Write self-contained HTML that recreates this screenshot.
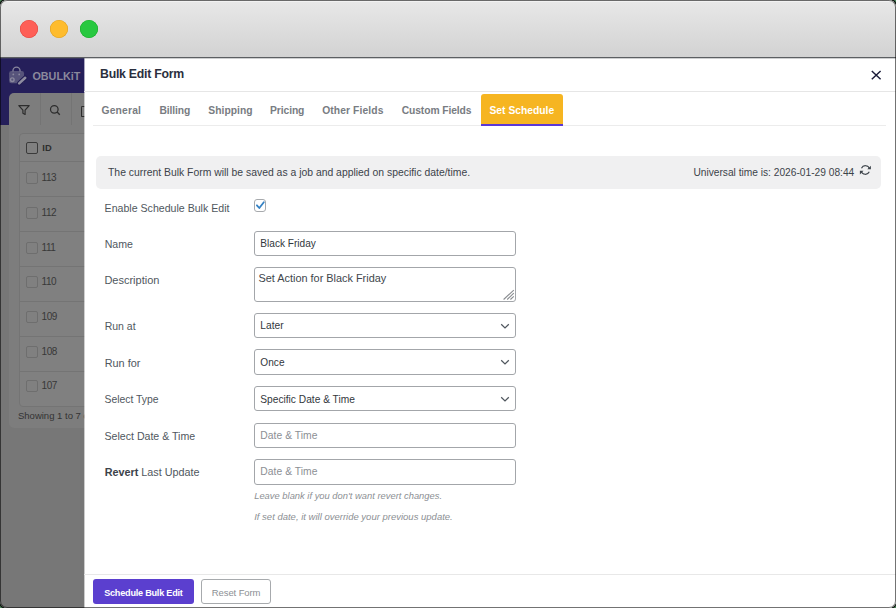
<!DOCTYPE html>
<html><head><meta charset="utf-8">
<style>
html,body{margin:0;padding:0;width:896px;height:608px;overflow:hidden;background:#4f8a5e;}
.win{position:absolute;left:0;top:0;width:896px;height:608px;border-radius:7px;overflow:hidden;background:#777;box-shadow:0 0 0 1.5px rgba(0,0,0,0.85);}
.b{position:absolute;box-sizing:content-box;}
.t{position:absolute;white-space:nowrap;line-height:1;font-family:"Liberation Sans",sans-serif;}
.title{position:absolute;left:0;top:0;width:896px;height:58px;background:linear-gradient(#e8e8e8,#d2d2d2);}
.dot{position:absolute;top:20px;width:18px;height:18px;border-radius:50%;}
.frame{position:absolute;left:0;top:0;width:894px;height:606px;border:1px solid rgba(0,0,0,0.55);border-radius:7px;pointer-events:none;}
</style></head><body>
<div class="win">
<div class="title">
<div class="b" style="left:0;top:1px;width:896px;height:1px;background:#f2f2f2"></div>
<div class="dot" style="left:20px;background:#fe5f57;box-shadow:inset 0 0 0 0.6px #e2463f"></div>
<div class="dot" style="left:50px;background:#febc2e;box-shadow:inset 0 0 0 0.6px #dfa023"></div>
<div class="dot" style="left:80px;background:#28c840;box-shadow:inset 0 0 0 0.6px #1aab29"></div>
<div class="b" style="left:0;top:57px;width:896px;height:1px;background:#5c5f62"></div>
</div>
<div class="b" style="left:0px;top:58px;width:896px;height:550px;background:#777777"></div>
<div class="b" style="left:0px;top:58px;width:896px;height:67px;background:#251f5a"></div>
<svg class="b" style="left:4px;top:62px" width="30" height="28" viewBox="0 0 30 28">
<rect x="5.1" y="9" width="14.9" height="12.2" rx="2.2" fill="#57547b"/>
<path d="M9 9.4 V8.6 a3.5 3.5 0 0 1 7 0 V9.4" fill="none" stroke="#8a889e" stroke-width="1.3"/>
<circle cx="9.3" cy="12.4" r="0.9" fill="#8a889e"/><circle cx="15.2" cy="12.4" r="0.9" fill="#8a889e"/>
<circle cx="8.3" cy="17.7" r="1.8" fill="none" stroke="#8a889e" stroke-width="1.4"/>
<path d="M15.2 21.4 L21.2 15.8" stroke="#201a52" stroke-width="4.6" stroke-linecap="round"/>
<path d="M15.2 21.4 L21.2 15.8" stroke="#8e8ca0" stroke-width="2.6" stroke-linecap="round"/>
</svg>
<div class="t" style="left:32.4px;top:71.06px;font-size:10.8px;color:#8b899c;font-weight:bold;font-style:normal;letter-spacing:0px;">OBULKiT</div>
<div class="b" style="left:9px;top:93px;width:120px;height:32px;background:#7d7d7d;border-top-left-radius:5px"></div>
<div class="b" style="left:40px;top:93px;width:1px;height:32px;background:#747474"></div>
<div class="b" style="left:71px;top:93px;width:1px;height:32px;background:#747474"></div>
<svg class="b" style="left:17px;top:103px" width="14" height="13" viewBox="0 0 14 13">
<path d="M1.8 2.6 h10.4 l-4.1 4.6 v4.3 l-2.2-1.2 v-3.1 z" fill="none" stroke="#2d2d2d" stroke-width="1.2" stroke-linejoin="round"/></svg>
<svg class="b" style="left:48px;top:103px" width="14" height="14" viewBox="0 0 14 14">
<circle cx="6.3" cy="6.3" r="3.8" fill="none" stroke="#2d2d2d" stroke-width="1.25"/><path d="M9.1 9.1 l2.7 2.7" stroke="#2d2d2d" stroke-width="1.35"/></svg>
<div class="b" style="left:81px;top:106px;width:5px;height:8.5px;border:1.2px solid #2d2d2d;border-right:none;border-radius:1.5px 0 0 1.5px"></div>
<div class="b" style="left:9px;top:125px;width:120px;height:303px;background:#7d7d7d;border-radius:0 0 5px 5px"></div>
<div class="b" style="left:18.6px;top:133px;width:110px;height:271.5px;background:#808080;border:1px solid #747474;border-radius:4px"></div>
<div class="b" style="left:20px;top:161px;width:110px;height:1px;background:#747474"></div>
<div class="b" style="left:26px;top:142px;width:10px;height:10px;border:1.3px solid #3a3a3a;border-radius:2px"></div>
<div class="t" style="left:42.3px;top:143.53px;font-size:9.3px;color:#2e2e2e;font-weight:bold;font-style:normal;letter-spacing:0px;">ID</div>
<div class="b" style="left:26px;top:172.4px;width:10px;height:10px;border:1px solid #6e6e6e;border-radius:2px"></div>
<div class="t" style="left:41.6px;top:173.44px;font-size:10px;color:#383838;font-weight:normal;font-style:normal;letter-spacing:-0.45px;">113</div>
<div class="b" style="left:20px;top:196.2px;width:110px;height:1px;background:#747474"></div>
<div class="b" style="left:26px;top:207.05px;width:10px;height:10px;border:1px solid #6e6e6e;border-radius:2px"></div>
<div class="t" style="left:41.6px;top:208.09px;font-size:10px;color:#383838;font-weight:normal;font-style:normal;letter-spacing:-0.45px;">112</div>
<div class="b" style="left:20px;top:231.1px;width:110px;height:1px;background:#747474"></div>
<div class="b" style="left:26px;top:241.7px;width:10px;height:10px;border:1px solid #6e6e6e;border-radius:2px"></div>
<div class="t" style="left:41.6px;top:242.73px;font-size:10px;color:#383838;font-weight:normal;font-style:normal;letter-spacing:-0.45px;">111</div>
<div class="b" style="left:20px;top:266.0px;width:110px;height:1px;background:#747474"></div>
<div class="b" style="left:26px;top:276.35px;width:10px;height:10px;border:1px solid #6e6e6e;border-radius:2px"></div>
<div class="t" style="left:41.6px;top:277.39px;font-size:10px;color:#383838;font-weight:normal;font-style:normal;letter-spacing:-0.45px;">110</div>
<div class="b" style="left:20px;top:300.9px;width:110px;height:1px;background:#747474"></div>
<div class="b" style="left:26px;top:311.0px;width:10px;height:10px;border:1px solid #6e6e6e;border-radius:2px"></div>
<div class="t" style="left:41.6px;top:312.04px;font-size:10px;color:#383838;font-weight:normal;font-style:normal;letter-spacing:-0.45px;">109</div>
<div class="b" style="left:20px;top:335.79999999999995px;width:110px;height:1px;background:#747474"></div>
<div class="b" style="left:26px;top:345.65px;width:10px;height:10px;border:1px solid #6e6e6e;border-radius:2px"></div>
<div class="t" style="left:41.6px;top:346.69px;font-size:10px;color:#383838;font-weight:normal;font-style:normal;letter-spacing:-0.45px;">108</div>
<div class="b" style="left:20px;top:370.7px;width:110px;height:1px;background:#747474"></div>
<div class="b" style="left:26px;top:380.29999999999995px;width:10px;height:10px;border:1px solid #6e6e6e;border-radius:2px"></div>
<div class="t" style="left:41.6px;top:381.33px;font-size:10px;color:#383838;font-weight:normal;font-style:normal;letter-spacing:-0.45px;">107</div>
<div class="t" style="left:18px;top:410.96px;font-size:9.5px;color:#333333;font-weight:normal;font-style:normal;letter-spacing:0px;">Showing 1 to 7 of</div>
<div class="b" style="left:85px;top:58px;width:811px;height:550px;background:#ffffff"></div>
<div class="b" style="left:84px;top:58px;width:1px;height:550px;background:rgba(255,255,255,0.62)"></div>
<div class="t" style="left:100px;top:67.89px;font-size:12.3px;color:#2b2f3e;font-weight:bold;font-style:normal;letter-spacing:-0.25px;">Bulk Edit Form</div>
<svg class="b" style="left:870px;top:68.5px" width="12" height="12" viewBox="0 0 12 12">
<path d="M1.8 1.9 L10.6 10.3 M10.6 1.9 L1.8 10.3" stroke="#1c1d3a" stroke-width="1.45"/></svg>
<div class="b" style="left:84px;top:91px;width:812px;height:1px;background:#e6e6e6"></div>
<div class="b" style="left:93px;top:125px;width:793px;height:1px;background:#ececec"></div>
<div class="b" style="left:481px;top:94px;width:82px;height:30px;background:#f6b521;border-radius:3px 3px 0 0"></div>
<div class="b" style="left:481px;top:124px;width:82px;height:2px;background:#5a38d5"></div>
<div class="t" style="left:101.5px;top:105.98px;font-size:10.3px;color:#787c82;font-weight:bold;font-style:normal;letter-spacing:0.18px;">General</div>
<div class="t" style="left:159.5px;top:105.98px;font-size:10.3px;color:#787c82;font-weight:bold;font-style:normal;letter-spacing:-0.12px;">Billing</div>
<div class="t" style="left:208.29999999999998px;top:105.98px;font-size:10.3px;color:#787c82;font-weight:bold;font-style:normal;letter-spacing:0.02px;">Shipping</div>
<div class="t" style="left:270.09999999999997px;top:105.98px;font-size:10.3px;color:#787c82;font-weight:bold;font-style:normal;letter-spacing:-0.1px;">Pricing</div>
<div class="t" style="left:322.2px;top:105.98px;font-size:10.3px;color:#787c82;font-weight:bold;font-style:normal;letter-spacing:0.1px;">Other Fields</div>
<div class="t" style="left:401.7px;top:105.98px;font-size:10.3px;color:#787c82;font-weight:bold;font-style:normal;letter-spacing:-0.09px;">Custom Fields</div>
<div class="t" style="left:489.5px;top:105.98px;font-size:10.3px;color:#ffffff;font-weight:bold;font-style:normal;letter-spacing:0px;">Set Schedule</div>
<div class="b" style="left:96px;top:156px;width:785px;height:33px;background:#f0f0f1;border-radius:5px"></div>
<div class="t" style="left:108px;top:168.10px;font-size:10.4px;color:#3c434a;font-weight:normal;font-style:normal;letter-spacing:0px;">The current Bulk Form will be saved as a job and applied on specific date/time.</div>
<div class="t" style="left:693.4px;top:168.27px;font-size:10.2px;color:#3c434a;font-weight:normal;font-style:normal;letter-spacing:0px;">Universal time is: 2026-01-29 08:44</div>
<svg class="b" style="left:858px;top:162.5px" width="15" height="14" viewBox="0 0 15 14">
<path d="M3.50 5.18 A4.3 4.3 0 0 1 11.55 5.89" fill="none" stroke="#3c434a" stroke-width="1.15"/>
<path d="M9.3 6.3 L12.9 6.3 L12.9 2.7 Z" fill="#3c434a"/>
<path d="M11.30 8.82 A4.3 4.3 0 0 1 3.25 8.11" fill="none" stroke="#3c434a" stroke-width="1.15"/>
<path d="M5.5 7.8 L1.9 7.8 L1.9 11.4 Z" fill="#3c434a"/>
</svg>
<div class="t" style="left:104.6px;top:202.53px;font-size:10.6px;color:#50575e;font-weight:normal;font-style:normal;letter-spacing:0px;">Enable Schedule Bulk Edit</div>
<div class="b" style="left:254.2px;top:199.3px;width:9.8px;height:10.4px;border:1px solid #a7aaad;border-radius:3px;background:#fff"></div>
<svg class="b" style="left:254px;top:199px" width="12" height="12" viewBox="0 0 12 12">
<path d="M2.9 6.3 L5.3 9 L9.8 3.2" fill="none" stroke="#3582c4" stroke-width="1.8" stroke-linecap="round" stroke-linejoin="round"/></svg>
<div class="t" style="left:104.7px;top:239.23px;font-size:10.6px;color:#50575e;font-weight:normal;font-style:normal;letter-spacing:0px;">Name</div>
<div class="b" style="left:254px;top:231px;width:260px;height:22.5px;border:1px solid #a3a6aa;border-radius:3px;background:#fff"></div>
<div class="t" style="left:260.3px;top:238.75px;font-size:10.1px;color:#32373c;font-weight:normal;font-style:normal;letter-spacing:0px;">Black Friday</div>
<div class="t" style="left:104.4px;top:275.19px;font-size:11px;color:#50575e;font-weight:normal;font-style:normal;letter-spacing:0px;">Description</div>
<div class="b" style="left:254px;top:267px;width:260px;height:32.5px;border:1px solid #a3a6aa;border-radius:3px;background:#fff"></div>
<div class="t" style="left:258.5px;top:272.97px;font-size:10.9px;color:#40464c;font-weight:normal;font-style:normal;letter-spacing:0px;">Set Action for Black Friday</div>
<svg class="b" style="left:500px;top:288px" width="16" height="14" viewBox="0 0 16 14">
<path d="M3.6 11.5 L13.8 2.1 M7.2 11.5 L13.8 5.2 M10.4 11.5 L13.8 8.3" stroke="#8a8d91" stroke-width="1.1"/></svg>
<div class="t" style="left:104.7px;top:321.31px;font-size:10.5px;color:#50575e;font-weight:normal;font-style:normal;letter-spacing:0px;">Run at</div>
<div class="b" style="left:254px;top:313.1px;width:260px;height:23.4px;border:1px solid #a3a6aa;border-radius:3px;background:#fff"></div>
<div class="t" style="left:260.3px;top:321.47px;font-size:10.2px;color:#32373c;font-weight:normal;font-style:normal;letter-spacing:0.05px;">Later</div>
<svg class="b" style="left:500px;top:322.4px" width="10" height="8" viewBox="0 0 10 8">
<path d="M1.2 2.3 L5 6 L8.8 2.3" fill="none" stroke="#50575e" stroke-width="1.25"/></svg>
<div class="t" style="left:104.7px;top:357.67px;font-size:10.9px;color:#50575e;font-weight:normal;font-style:normal;letter-spacing:0px;">Run for</div>
<div class="b" style="left:254px;top:349.3px;width:260px;height:23.4px;border:1px solid #a3a6aa;border-radius:3px;background:#fff"></div>
<div class="t" style="left:260.3px;top:358.05px;font-size:10.1px;color:#32373c;font-weight:normal;font-style:normal;letter-spacing:0.05px;">Once</div>
<svg class="b" style="left:500px;top:358.4px" width="10" height="8" viewBox="0 0 10 8">
<path d="M1.2 2.3 L5 6 L8.8 2.3" fill="none" stroke="#50575e" stroke-width="1.25"/></svg>
<div class="t" style="left:104.5px;top:394.50px;font-size:10.4px;color:#50575e;font-weight:normal;font-style:normal;letter-spacing:0px;">Select Type</div>
<div class="b" style="left:254px;top:386.1px;width:260px;height:23.3px;border:1px solid #a3a6aa;border-radius:3px;background:#fff"></div>
<div class="t" style="left:260.3px;top:394.57px;font-size:10.2px;color:#32373c;font-weight:normal;font-style:normal;letter-spacing:0px;">Specific Date &amp; Time</div>
<svg class="b" style="left:500px;top:395.4px" width="10" height="8" viewBox="0 0 10 8">
<path d="M1.2 2.3 L5 6 L8.8 2.3" fill="none" stroke="#50575e" stroke-width="1.25"/></svg>
<div class="t" style="left:104.5px;top:430.93px;font-size:10.6px;color:#50575e;font-weight:normal;font-style:normal;letter-spacing:0px;">Select Date &amp; Time</div>
<div class="b" style="left:254px;top:423px;width:260px;height:22.6px;border:1px solid #a3a6aa;border-radius:3px;background:#fff"></div>
<div class="t" style="left:260.3px;top:430.88px;font-size:10.3px;color:#8c8f94;font-weight:normal;font-style:normal;letter-spacing:0.05px;">Date &amp; Time</div>
<div class="t" style="left:104.7px;top:467.36px;font-size:10.8px;color:#50575e;font-weight:normal;font-style:normal;letter-spacing:0px;"><b style='color:#3c434a'>Revert</b> Last Update</div>
<div class="b" style="left:254px;top:459.3px;width:260px;height:23.3px;border:1px solid #a3a6aa;border-radius:3px;background:#fff"></div>
<div class="t" style="left:260.3px;top:467.48px;font-size:10.3px;color:#8c8f94;font-weight:normal;font-style:normal;letter-spacing:0.05px;">Date &amp; Time</div>
<div class="t" style="left:254.2px;top:491.04px;font-size:9.4px;color:#8c8f94;font-weight:normal;font-style:italic;letter-spacing:0px;">Leave blank if you don't want revert changes.</div>
<div class="t" style="left:254.2px;top:511.66px;font-size:9.5px;color:#8c8f94;font-weight:normal;font-style:italic;letter-spacing:0px;">If set date, it will override your previous update.</div>
<div class="b" style="left:84px;top:574px;width:812px;height:1px;background:#e8e8e8"></div>
<div class="b" style="left:93px;top:579px;width:101px;height:25px;background:#5b3fcf;border-radius:3px"></div>
<div class="t" style="left:104.2px;top:588.70px;font-size:9.1px;color:#ffffff;font-weight:bold;font-style:normal;letter-spacing:-0.22px;">Schedule Bulk Edit</div>
<div class="b" style="left:201px;top:579px;width:68px;height:23px;border:1px solid #a7aaad;border-radius:3px;background:#fff"></div>
<div class="t" style="left:211.8px;top:588.26px;font-size:9.5px;color:#8c8f94;font-weight:normal;font-style:normal;letter-spacing:-0.1px;">Reset Form</div>

<div class="b" style="left:0;top:58px;width:896px;height:1px;background:rgba(92,95,98,0.3)"></div>
<div class="frame"></div>
</div>
</body></html>
